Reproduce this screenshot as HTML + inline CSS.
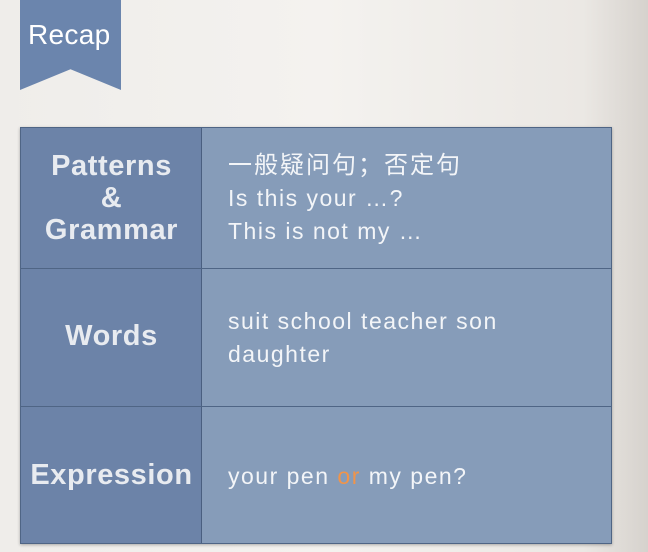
<!DOCTYPE html>
<html><head><style>
html,body{margin:0;padding:0}
body{width:648px;height:552px;overflow:hidden;position:relative;font-family:"Liberation Sans","Noto Sans CJK SC",sans-serif;background:linear-gradient(90deg,#efedea 0%,#f4f2ef 50%,#ebe8e4 90%,#d6d2cd 100%)}
.banner{position:absolute;left:20px;top:0;width:101px;height:90px;background:#6b85ad;clip-path:polygon(0 0,100% 0,100% 100%,50% 77%,0 100%)}
.banner span{position:absolute;left:8px;top:19px;color:#fff;font-size:28px;letter-spacing:0.3px}
.tbl{position:absolute;left:20px;top:127px;width:592px;height:417px;background:#869cb9;border:1px solid #4f6585;box-sizing:border-box;box-shadow:0 1px 3px rgba(0,0,0,.3)}
.left{position:absolute;left:0;top:0;width:180px;height:100%;background:#6c83a8;border-right:1px solid #4a5f80}
.h{position:absolute;height:1px;left:0;right:0;background:#4f6585}
.lab{position:absolute;left:0;width:181px;text-align:center;color:#e8ebf0;font-weight:bold;font-size:29px;line-height:32px;letter-spacing:0.6px}
.txt{position:absolute;left:207px;color:#f3f5f8;font-size:23px;line-height:33px;letter-spacing:1.5px}
</style></head><body>
<div class="banner"><span>Recap</span></div>
<div class="tbl">
<div class="left"></div>
<div class="h" style="top:140px"></div>
<div class="h" style="top:278px"></div>
<div class="lab" style="top:22px">Patterns<br>&amp;<br>Grammar</div>
<div class="txt" style="top:21px"><span style="font-size:24px;letter-spacing:2px">一般疑问句；否定句</span><br>Is this your …?<br>This is not my …</div>
<div class="lab" style="top:192px">Words</div>
<div class="txt" style="top:177px">suit school teacher son<br>daughter</div>
<div class="lab" style="top:331px">Expression</div>
<div class="txt" style="top:332px">your pen <span style="color:#f0944a">or</span> my pen?</div>
</div>
</body></html>
